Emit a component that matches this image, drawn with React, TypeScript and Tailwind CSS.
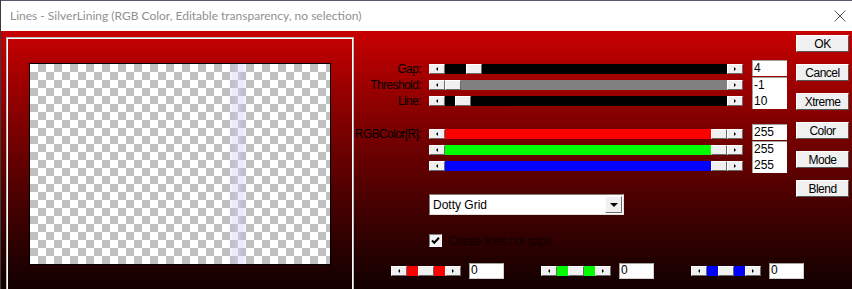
import React from "react";

const ArrowBtn = ({ dir }: { dir: "l" | "r" }) => (
  <div className="w-[16px] h-[10px] shrink-0 bg-[#f0f0f0] border border-t-white border-l-white border-r-[#696969] border-b-[#696969] flex items-center justify-center">
    {dir === "l" ? (
      <div className="w-0 h-0 border-y-[2px] border-y-transparent border-r-[2px] border-r-black" />
    ) : (
      <div className="w-0 h-0 border-y-[2px] border-y-transparent border-l-[2px] border-l-black" />
    )}
  </div>
);

const Thumb = ({ cls = "" }: { cls?: string }) => (
  <div className={"w-[16px] h-[10px] shrink-0 bg-[#f0f0f0] border border-t-white border-l-white border-r-[#696969] border-b-[#696969] " + cls} />
);

const Slider = ({ track, thumb }: { track: string; thumb: string }) => (
  <div className="flex h-[10px] w-[314px]">
    <ArrowBtn dir="l" />
    <div className={"flex-1 flex " + track}>
      <Thumb cls={thumb} />
    </div>
    <ArrowBtn dir="r" />
  </div>
);

const Row = ({ label, track, thumb }: { label: string; track: string; thumb: string }) => (
  <div className="flex items-center h-[10px]">
    <div className="w-[67px] text-right text-[12px] leading-[10px] tracking-[-0.6px] text-black whitespace-nowrap">{label}</div>
    <div className="ml-[8px]">
      <Slider track={track} thumb={thumb} />
    </div>
  </div>
);

const Btn = ({ label }: { label: string }) => (
  <div className="h-[17px] w-[53px] bg-[#f0f0f0] border border-t-white border-l-white border-r-[#555] border-b-[#555] flex items-center justify-center text-[12px] tracking-[-0.5px] text-black leading-none">
    {label}
  </div>
);

const Box = ({ lines, tall }: { lines: string[]; tall?: boolean }) => (
  <div
    className={
      "w-[35px] bg-white border-l border-t border-[#a0a0a0] pl-[1px] text-[12px] leading-[16px] text-black " +
      (tall ? "h-[32px]" : "h-[16px]")
    }
  >
    {lines.map((l, i) => (
      <div key={i} className="h-[16px] leading-[14px]">
        {l}
      </div>
    ))}
  </div>
);

const Mini = ({ color }: { color: string }) => (
  <div className="flex items-center">
    <div className="flex h-[10px]">
      <ArrowBtn dir="l" />
      <div className={"w-[11px] h-[10px] " + color} />
      <Thumb />
      <div className={"w-[11px] h-[10px] " + color} />
      <ArrowBtn dir="r" />
    </div>
    <div className="ml-[8px] w-[35px] h-[16px] bg-white border-l border-t border-[#a0a0a0] border-r border-b border-r-[#d0d0d0] border-b-[#d0d0d0] pl-[1px] text-[12px] leading-[13px] text-black">
      0
    </div>
  </div>
);

export default function App() {
  return (
    <div
      className="w-[852px] h-[289px] overflow-hidden border-l border-[#3c3c3c] flex flex-col"
      style={{ fontFamily: '"Liberation Sans", Arial, sans-serif' }}
    >
      <div className="h-[31px] shrink-0 bg-white border-t border-[#5a5a6e] flex items-center justify-between">
        <div
          className="pl-[9px] text-[12px] text-[#909090] whitespace-nowrap"
          style={{ fontFamily: 'Lato, "Noto Sans", sans-serif' }}
        >
          Lines - SilverLining (RGB Color, Editable transparency, no selection)
        </div>
        <svg width="12" height="12" viewBox="0 0 12 12" className="mr-[6px]">
          <path d="M0.5 0.5 L11.5 11.5 M11.5 0.5 L0.5 11.5" stroke="#555" strokeWidth="1" fill="none" />
        </svg>
      </div>
      <div className="h-[258px] shrink-0 bg-linear-to-b from-[#c80000] to-[#120000] flex overflow-hidden">
        <div className="ml-[5px] mt-[6px] w-[348px] h-[260px] shrink-0 border border-[#b8b8b8]">
          <div className="w-full h-full border border-white">
            <div className="ml-[21px] mt-[24px] w-[302px] h-[202px] border border-black relative bg-[image:conic-gradient(#c0c0c0_25%,white_0_50%,#c0c0c0_0_75%,white_0)] bg-[length:16px_16px]">
              <div className="absolute top-0 bottom-0 left-[198px] w-[20px] bg-[linear-gradient(to_right,rgba(200,200,235,0),rgba(190,190,235,0.35)_30%,rgba(215,215,250,0.45)_50%,rgba(190,190,235,0.35)_70%,rgba(200,200,235,0))]" />
            </div>
          </div>
        </div>

        <div className="w-[442px] shrink-0 flex flex-col">
          <div className="flex mt-[29px]">
            <div className="flex flex-col gap-[6px] pt-[4px]">
              <Row label="Gap:" track="bg-black" thumb="ml-[21px]" />
              <Row label="Threshold:" track="bg-[#808080]" thumb="ml-0" />
              <Row label="Line:" track="bg-black" thumb="ml-[10px]" />
            </div>
            <div className="ml-[9px] flex flex-col gap-[1px]">
              <Box lines={["4"]} />
              <Box lines={["-1", "10"]} tall />
            </div>
          </div>

          <div className="flex mt-[15px]">
            <div className="flex flex-col gap-[6px] pt-[5px]">
              <Row label="RGBColor[R]:" track="bg-[#ff0000]" thumb="ml-auto" />
              <Row label="" track="bg-[#00ff00]" thumb="ml-auto" />
              <Row label="" track="bg-[#0000ff]" thumb="ml-auto" />
            </div>
            <div className="ml-[9px] flex flex-col gap-[1px]">
              <Box lines={["255"]} />
              <Box lines={["255", "255"]} tall />
            </div>
          </div>

          <div className="ml-[75px] mt-[21px] w-[195px] h-[21px] bg-white border border-t-[#808080] border-l-[#808080] border-r-[#e0e0e0] border-b-[#e0e0e0] flex items-center justify-between">
            <span className="pl-[3px] text-[12px] text-black">Dotty Grid</span>
            <div className="mr-[1px] w-[17px] h-[17px] bg-[#f0f0f0] border border-t-white border-l-white border-r-[#696969] border-b-[#696969] flex items-center justify-center">
              <div className="w-0 h-0 border-x-[4px] border-x-transparent border-t-[4px] border-t-black" />
            </div>
          </div>

          <div className="ml-[75px] mt-[19px] flex items-center h-[13px]">
            <div className="w-[13px] h-[13px] bg-[#f4f4f4] border border-t-[#808080] border-l-[#808080] border-r-white border-b-white flex items-center justify-center">
              <svg width="11" height="11" viewBox="0 0 11 11">
                <path d="M2 5.5 L4.3 7.8 L9 2.8" stroke="black" strokeWidth="2" fill="none" />
              </svg>
            </div>
            <span className="ml-[6px] text-[12px] tracking-[-0.5px] text-[#120000]">Create lines not gaps</span>
          </div>

          <div className="ml-[37px] mt-[16px] flex gap-[37px]">
            <Mini color="bg-[#ff0000]" />
            <Mini color="bg-[#00ff00]" />
            <Mini color="bg-[#0000ff]" />
          </div>
        </div>

        <div className="w-[53px] shrink-0 flex flex-col mt-[4px] gap-[12px]">
          <Btn label="OK" />
          <Btn label="Cancel" />
          <Btn label="Xtreme" />
          <Btn label="Color" />
          <Btn label="Mode" />
          <Btn label="Blend" />
        </div>
      </div>
    </div>
  );
}
